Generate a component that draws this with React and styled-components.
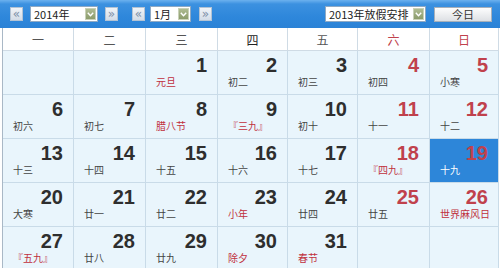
import React from "react";
import styled, { createGlobalStyle } from "styled-components";

const Global = createGlobalStyle`
  html, body { margin: 0; padding: 0; background: #fff; }
  body { font-family: "Liberation Sans", "Noto Sans CJK SC", sans-serif; }
  * { box-sizing: border-box; }
`;

const Page = styled.div`
  width: 500px;
  height: 268px;
  overflow: hidden;
  background: #fff;
`;

const Toolbar = styled.div`
  height: 28px;
  display: flex;
  align-items: center;
  padding: 0 8px 0 10px;
  background: linear-gradient(to bottom, #6cb1ee 0px, #3c91e0 4px, #2e87db 60%, #2b82d6 100%);
`;

const NavBtn = styled.div`
  width: 13px;
  height: 14px;
  margin-left: ${(p) => p.$ml || 0}px;
  display: flex;
  align-items: center;
  justify-content: center;
  border: 1px solid #b3c3d4;
  background: linear-gradient(to bottom, #f1f4f8, #d3dce7);
  color: #7d90a8;
  font-family: "DejaVu Sans", sans-serif;
  font-size: 12px;
  line-height: 1;
`;

const Select = styled.div`
  width: ${(p) => p.$w}px;
  height: 16px;
  margin-left: ${(p) => p.$ml || 0}px;
  display: flex;
  align-items: center;
  justify-content: space-between;
  padding: 0 1px 0 3px;
  background: #fff;
  border: 1px solid #8fa9c4;
  font-family: "Noto Sans CJK SC", "Liberation Sans", sans-serif;
  font-size: 11px;
  color: #222;
`;

const Arrow = styled.div`
  width: 11px;
  height: 12px;
  display: flex;
  align-items: center;
  justify-content: center;
  background: linear-gradient(to bottom, #aebb92, #8c9c6c);
  border: 1px solid #c9d1b8;
`;

const Spacer = styled.div`
  flex: 1;
`;

const TodayBtn = styled.div`
  width: 58px;
  height: 15px;
  margin-left: 8px;
  display: flex;
  align-items: center;
  justify-content: center;
  border: 1px solid #a7b0ba;
  background: linear-gradient(to bottom, #fdfdfd, #dde0e4);
  font-family: "Noto Sans CJK SC", sans-serif;
  font-size: 11px;
  color: #333;
`;

const GridWrap = styled.div`
  padding-left: 2px;
`;

const Grid = styled.div`
  display: grid;
  grid-template-columns: 71px 72px 72px 70px 70px 72px 69px;
  border-left: 1px solid #a9b8c6;
`;

const Head = styled.div`
  height: 23px;
  display: flex;
  align-items: center;
  justify-content: center;
  background: #fff;
  border-right: 1px solid #cfdbe5;
  border-bottom: 1px solid #cfdbe5;
  font-family: "Noto Sans CJK SC", sans-serif;
  font-size: 12px;
  color: ${(p) => (p.$red ? "#c0414c" : p.$dark ? "#222" : "#555")};
`;

const Cell = styled.div`
  height: 44px;
  padding-top: 3px;
  background: ${(p) => (p.$today ? "#2d86d9" : "#e9f5fc")};
  border-right: 1px solid #c9dbe8;
  border-bottom: 1px solid #c9dbe8;
`;

const Num = styled.div`
  height: 22px;
  line-height: 22px;
  padding-right: 10px;
  text-align: right;
  font-family: "Liberation Sans", Arial, sans-serif;
  font-weight: bold;
  font-size: 20px;
  color: ${(p) => (p.$red ? "#c0414c" : "#2e2e2e")};
`;

const Lunar = styled.div`
  height: 12px;
  line-height: 12px;
  padding-left: 10px;
  font-family: "Noto Sans CJK SC", sans-serif;
  font-size: 10px;
  white-space: nowrap;
  color: ${(p) => (p.$today ? "#fff" : p.$red ? "#c0303c" : "#444")};
`;

const Chevron = () => (
  <svg width="7" height="5" viewBox="0 0 7 5">
    <path d="M0.8 0.8 L3.5 3.8 L6.2 0.8" fill="none" stroke="#fff" strokeWidth="1.4" />
  </svg>
);

const weekdays = ["一", "二", "三", "四", "五", "六", "日"];

const rows = [
  [null, null, [1, "元旦", 1], [2, "初二"], [3, "初三"], [4, "初四"], [5, "小寒"]],
  [[6, "初六"], [7, "初七"], [8, "腊八节", 1], [9, "『三九』", 1], [10, "初十"], [11, "十一"], [12, "十二"]],
  [[13, "十三"], [14, "十四"], [15, "十五"], [16, "十六"], [17, "十七"], [18, "『四九』", 1], [19, "十九"]],
  [[20, "大寒"], [21, "廿一"], [22, "廿二"], [23, "小年", 1], [24, "廿四"], [25, "廿五"], [26, "世界麻风日", 1]],
  [[27, "『五九』", 1], [28, "廿八"], [29, "廿九"], [30, "除夕", 1], [31, "春节", 1], null, null],
];

export default function App() {
  return (
    <Page>
      <Global />
      <Toolbar>
        <NavBtn>«</NavBtn>
        <Select $w={68} $ml={7}>
          <span>2014年</span>
          <Arrow><Chevron /></Arrow>
        </Select>
        <NavBtn $ml={7}>»</NavBtn>
        <NavBtn $ml={14}>«</NavBtn>
        <Select $w={41} $ml={5}>
          <span>1月</span>
          <Arrow><Chevron /></Arrow>
        </Select>
        <NavBtn $ml={8}>»</NavBtn>
        <Spacer />
        <Select $w={101}>
          <span>2013年放假安排</span>
          <Arrow><Chevron /></Arrow>
        </Select>
        <TodayBtn>今日</TodayBtn>
      </Toolbar>
      <GridWrap>
        <Grid>
          {weekdays.map((w, i) => (
            <Head key={w} $red={i >= 5} $dark={i === 3}>{w}</Head>
          ))}
          {rows.flatMap((row, r) =>
            row.map((c, i) => {
              if (!c) return <Cell key={`${r}-${i}`} />;
              const [n, text, red] = c;
              const today = n === 19;
              return (
                <Cell key={`${r}-${i}`} $today={today}>
                  <Num $red={i >= 5}>{n}</Num>
                  <Lunar $red={!!red} $today={today}>{text}</Lunar>
                </Cell>
              );
            })
          )}
        </Grid>
      </GridWrap>
    </Page>
  );
}
